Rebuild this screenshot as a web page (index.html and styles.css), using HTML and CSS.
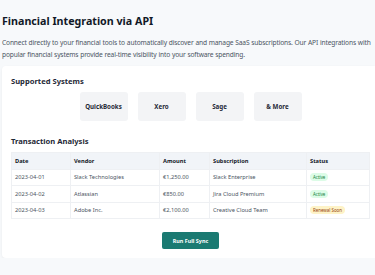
FILE: index.html
```html
<!DOCTYPE html>
<html lang="en">
<head>
  <meta charset="UTF-8">
  <meta name="viewport" content="width=device-width, initial-scale=1.0">
  <title>Financial Integration via API</title>
  <link rel="stylesheet" href="styles.css">
</head>
<body>
  <div class="page">
    <h1>Financial Integration via API</h1>
    <p class="intro">Connect directly to your financial tools to automatically discover and manage SaaS subscriptions. Our API integrations with popular financial systems provide real-time visibility into your software spending.</p>

    <div class="card">
      <h3>Supported Systems</h3>
      <div class="systems">
        <div class="system">QuickBooks</div>
        <div class="system">Xero</div>
        <div class="system">Sage</div>
        <div class="system">&amp; More</div>
      </div>

      <h3 class="tx-title">Transaction Analysis</h3>
      <table class="tx-table">
        <thead>
          <tr>
            <th class="col-date">Date</th>
            <th class="col-vendor">Vendor</th>
            <th class="col-amount">Amount</th>
            <th class="col-sub">Subscription</th>
            <th class="col-status">Status</th>
          </tr>
        </thead>
        <tbody>
          <tr>
            <td>2023-04-01</td>
            <td>Slack Technologies</td>
            <td>€1,250.00</td>
            <td>Slack Enterprise</td>
            <td><span class="badge active">Active</span></td>
          </tr>
          <tr>
            <td>2023-04-02</td>
            <td>Atlassian</td>
            <td>€850.00</td>
            <td>Jira Cloud Premium</td>
            <td><span class="badge active">Active</span></td>
          </tr>
          <tr>
            <td>2023-04-03</td>
            <td>Adobe Inc.</td>
            <td>€2,100.00</td>
            <td>Creative Cloud Team</td>
            <td><span class="badge renewal">Renewal Soon</span></td>
          </tr>
        </tbody>
      </table>

      <div class="actions">
        <button type="button" class="sync-btn">Run Full Sync</button>
      </div>
    </div>
  </div>
</body>
</html>
```

FILE: styles.css
```css
html, body {
  overflow: hidden;
}

body {
  font-family: "Noto Sans", "Open Sans", Arial, sans-serif;
  background-color: #f7f9fb;
  color: #1f2937;
  margin: 0;
  padding: 0;
}

.page {
  width: 377px;
  padding: 13px 0 0 2px;
}

h1 {
  font-size: 10.7px;
  font-weight: 700;
  margin: 0 0 8px 0;
  line-height: 16px;
  color: #111827;
}

.intro {
  font-size: 6.65px;
  letter-spacing: -0.15px;
  word-spacing: 0.3px;
  line-height: 12px;
  color: #4b5563;
  margin: 0 0 5px 0;
}

.card {
  background-color: #ffffff;
  border-radius: 4px;
  box-shadow: 0 1px 3px rgba(0, 0, 0, 0.06);
  padding: 9px 9px 9px 9px;
}

h3 {
  font-size: 7.6px;
  font-weight: 700;
  margin: 0;
  line-height: 12px;
  color: #1f2937;
}

.systems {
  display: flex;
  justify-content: center;
  gap: 10px;
  margin: 5px 0 0 0;
}

.system {
  width: 48px;
  height: 29px;
  background-color: #f3f4f6;
  border-radius: 3px;
  display: flex;
  align-items: center;
  justify-content: center;
  font-size: 6.2px;
  font-weight: 700;
  color: #1f2937;
}

.tx-title {
  margin-top: 14px;
}

.tx-table {
  width: 359px;
  border-collapse: collapse;
  margin-top: 5px;
  font-size: 5.7px;
  color: #4b5563;
}

.tx-table th,
.tx-table td {
  border: 1px solid #eef0f3;
  text-align: left;
  padding: 0 3px;
  height: 15.5px;
}

.tx-table th {
  background-color: #f1f4f8;
  font-weight: 700;
  color: #111827;
}

.col-date { width: 52px; }
.col-vendor { width: 82px; }
.col-amount { width: 43px; }
.col-sub { width: 90px; }

.badge {
  display: inline-block;
  padding: 1px 3px;
  border-radius: 5px;
  font-size: 4.4px;
  line-height: 6px;
}

.badge.active {
  background-color: #dcfce7;
  color: #15803d;
}

.badge.renewal {
  background-color: #fef3c7;
  color: #92400e;
}

.actions {
  display: flex;
  justify-content: center;
  margin-top: 13px;
}

.sync-btn {
  width: 57px;
  height: 17px;
  background-color: #1b7a72;
  color: #ffffff;
  border: none;
  border-radius: 2px;
  font-family: inherit;
  font-size: 5.4px;
  font-weight: 700;
  padding: 0;
  cursor: pointer;
}
```
